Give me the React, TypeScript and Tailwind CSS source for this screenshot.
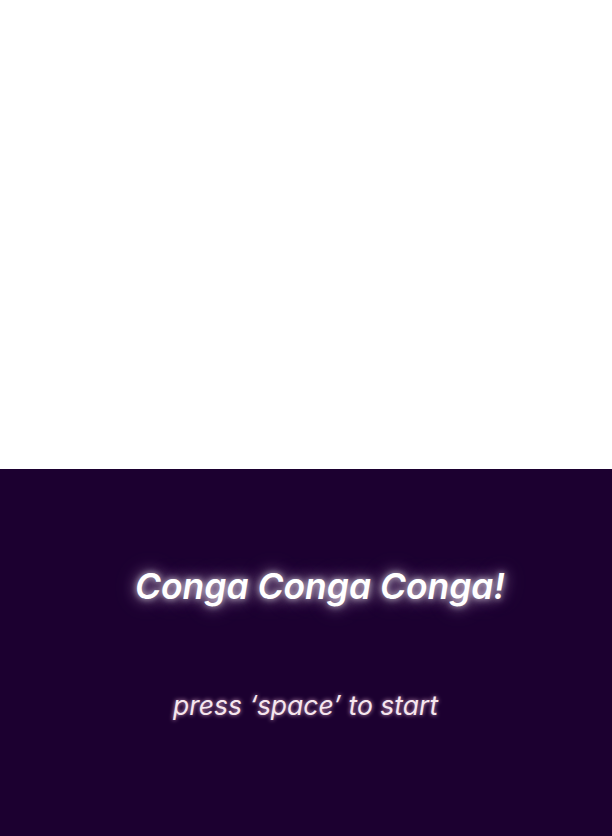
export default function App() {
  return (
    <div className="w-[612px] h-[836px] flex flex-col bg-white" style={{ fontFamily: "Inter, 'Noto Sans', sans-serif" }}>
      <div className="h-[469px] shrink-0" />
      <div className="flex-1 bg-[#1c0030] flex flex-col">
        <div className="pt-[96px] pl-[135px]">
          <h1 className="text-[35.4px] leading-[44px] font-semibold italic text-white whitespace-nowrap [text-shadow:0_0_6px_rgba(255,255,255,0.7),0_0_14px_rgba(255,230,255,0.55),0_0_22px_rgba(230,200,255,0.35)]">
            Conga Conga Conga!
          </h1>
        </div>
        <div className="pt-[79px] pl-[173px]">
          <p className="text-[26.5px] leading-[34px] italic text-[#f6e6ee] whitespace-nowrap [text-shadow:0_0_4px_rgba(255,200,230,0.8)]">
            press ‘space’ to start
          </p>
        </div>
      </div>
    </div>
  );
}
